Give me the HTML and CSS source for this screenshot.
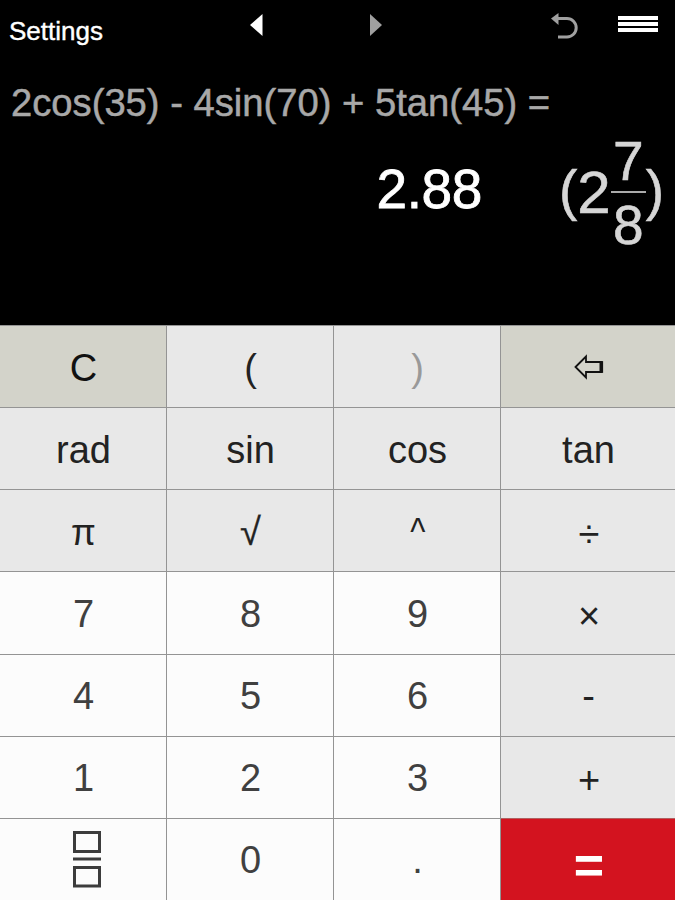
FILE: index.html
```html
<!DOCTYPE html>
<html lang="en">
<head>
  <meta charset="UTF-8">
  <meta name="viewport" content="width=device-width, initial-scale=1.0">
  <title>Calculator</title>
  <link rel="stylesheet" href="styles.css">
</head>
<body>
  <div class="display">
    <div class="toolbar">
      <span class="settings">Settings</span>
      <svg class="prev" width="13" height="22" viewBox="0 0 13 22"><path d="M12.5 0v22L0 11z" fill="#fff"/></svg>
      <svg class="next" width="13" height="22" viewBox="0 0 13 22"><path d="M0 0v22L12 11z" fill="#a0a0a0"/></svg>
      <svg class="undo" width="28" height="28" viewBox="0 0 28 28">
        <path d="M5 5.5h11a9.1 9.1 0 0 1 0 18.4H7" fill="none" stroke="#a0a0a0" stroke-width="3"/>
        <path d="M7.5 0v12L0 5.5z" fill="#a0a0a0"/>
      </svg>
      <div class="menu"><i></i><i></i><i></i></div>
    </div>
    <div class="expression">2cos(35) - 4sin(70) + 5tan(45) =</div>
    <div class="answer">
      <span class="decimal">2.88</span>
      <div class="mixed">
        <span class="paren">(</span>
        <span class="whole">2</span>
        <div class="frac"><span class="num">7</span><span class="den">8</span></div>
        <span class="paren">)</span>
      </div>
    </div>
  </div>

  <div class="keypad">
    <div class="key edit"><span>C</span></div>
    <div class="key func"><span>(</span></div>
    <div class="key func off"><span>)</span></div>
    <div class="key edit">
      <svg class="back" width="30" height="26" viewBox="0 0 30 26">
        <path d="M1.5 13L12 2.5V8h15v10H12v5.5z" fill="none" stroke="#111" stroke-width="1.8"/>
        <path d="M27.3 7.1v11.8" stroke="#111" stroke-width="3.6"/>
      </svg>
    </div>

    <div class="key func"><span>rad</span></div>
    <div class="key func"><span>sin</span></div>
    <div class="key func"><span>cos</span></div>
    <div class="key func"><span>tan</span></div>

    <div class="key func"><span class="pi">π</span></div>
    <div class="key func"><span class="root">√</span></div>
    <div class="key func"><span class="power">^</span></div>
    <div class="key func"><span class="op">÷</span></div>

    <div class="key"><span>7</span></div>
    <div class="key"><span>8</span></div>
    <div class="key"><span>9</span></div>
    <div class="key func"><span class="op">×</span></div>

    <div class="key"><span>4</span></div>
    <div class="key"><span>5</span></div>
    <div class="key"><span>6</span></div>
    <div class="key func"><span>-</span></div>

    <div class="key"><span>1</span></div>
    <div class="key"><span>2</span></div>
    <div class="key"><span>3</span></div>
    <div class="key func"><span class="op">+</span></div>

    <div class="key">
      <svg class="fraction" width="28" height="57" viewBox="0 0 28 57">
        <path d="M1.5 1.5h25v19h-25zM1.5 36.5h25v18.5h-25zM0 28h28" fill="none" stroke="#3c3c3c" stroke-width="3"/>
      </svg>
    </div>
    <div class="key"><span>0</span></div>
    <div class="key"><span>.</span></div>
    <div class="key equals"><span>=</span></div>
  </div>
</body>
</html>
```

FILE: styles.css
```css
* {
  box-sizing: border-box;
}
body {
  margin: 0;
  width: 675px;
  height: 900px;
  display: flex;
  flex-direction: column;
  overflow: hidden;
  background: #000;
  font-family: "Liberation Sans", Arial, sans-serif;
}
.display {
  height: 325px;
  color: #fff;
}
.toolbar {
  display: flex;
  align-items: flex-start;
  height: 60px;
  padding: 14px 17px 0 9px;
}
.settings {
  width: 241px;
  margin-top: 2px;
  font-size: 26px;
  line-height: 30px;
  -webkit-text-stroke: 0.4px #fff;
}
.next {
  margin-left: 107px;
}
.undo {
  margin: -1px 0 0 168px;
}
.menu {
  display: flex;
  flex-direction: column;
  gap: 2px;
  width: 40px;
  margin: 2px 0 0 auto;
}
.menu i {
  height: 4px;
  background: #fff;
}
.expression {
  padding: 21px 0 0 11px;
  font-size: 38.2px;
  line-height: 44px;
  color: #a8a8a8;
  white-space: nowrap;
  -webkit-text-stroke: 0.5px #a8a8a8;
}
.answer {
  display: flex;
  justify-content: flex-end;
  padding: 13px 11px 0 0;
}
.decimal {
  margin: 20px 77px 0 0;
  font-size: 55px;
  line-height: 62px;
  letter-spacing: -0.4px;
  -webkit-text-stroke: 0.8px #fff;
}
.mixed {
  display: flex;
  color: #d6d6d6;
  -webkit-text-stroke: 0.6px #d6d6d6;
}
.paren {
  margin-top: 21px;
  font-size: 55px;
  line-height: 62px;
}
.whole {
  margin-top: 20px;
  font-size: 60px;
  line-height: 70px;
}
.frac {
  display: flex;
  flex-direction: column;
  width: 35px;
  text-align: center;
  font-size: 55px;
}
.num {
  height: 55px;
  line-height: 46px;
  border-bottom: 2px solid #aaa;
}
.den {
  line-height: 64px;
}
.keypad {
  flex: 1;
  display: grid;
  grid-template-columns: 167px 167px 167px 1fr;
  grid-template-rows: repeat(7, 1fr);
}
.key {
  display: flex;
  align-items: center;
  justify-content: center;
  padding: 2px 0 0 1px;
  border-top: 1px solid #949494;
  border-right: 1px solid #949494;
  background: #fcfcfc;
  color: #404040;
  font-size: 38px;
  line-height: 44px;
}
.key:nth-child(4n) {
  border-right: none;
}
.func {
  background: #e8e8e8;
  color: #222;
}
.edit {
  background: #d3d3ca;
  color: #111;
}
.off {
  color: #999;
}
.op {
  padding: 4px 0 0 1px;
}
.pi {
  padding-top: 2px;
  font-size: 36px;
}
.root {
  font-size: 38px;
  -webkit-text-stroke: 0.3px #222;
}
.power {
  transform: scale(0.85, 1);
}
.back {
  margin: -2px 0 0 1px;
}
.equals {
  padding: 12px 0 0 2px;
  background: #d3131f;
  border-top-color: #b06060;
  color: #fff;
  font-size: 52px;
  font-weight: bold;
}
.fraction {
  margin: -2px 0 0 6px;
}
```
